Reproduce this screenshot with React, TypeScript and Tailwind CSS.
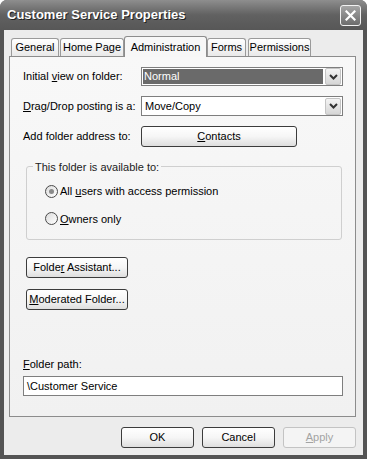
import React from "react";

const font = { fontFamily: '"Liberation Sans", Arial, sans-serif' };

const Tab = ({ label, width, active }: { label: string; width: string; active?: boolean }) => (
  <div
    className={
      active
        ? `${width} h-[21px] -mb-px relative z-10 border border-b-0 border-[#8c8c8c] rounded-t-[3px] bg-[#f7f7f7] flex items-center justify-center text-[11px] text-black`
        : `${width} h-[18px] border border-b-0 border-[#9a9a9a] rounded-t-[3px] bg-gradient-to-b from-white to-[#e9e9e9] flex items-center justify-center text-[11px] text-black`
    }
  >
    {label}
  </div>
);

const Chevron = () => (
  <div className="w-[16px] h-[17px] rounded-[2px] border border-[#c4c4c4] bg-gradient-to-b from-[#f4f4f4] to-[#d6d6d6] flex items-center justify-center">
    <svg width="9" height="6" viewBox="0 0 9 6">
      <path d="M1 1 L4.5 4.5 L8 1" fill="none" stroke="#333" strokeWidth="2" />
    </svg>
  </div>
);

const XpButton = ({
  children,
  width,
  disabled,
}: {
  children: React.ReactNode;
  width: string;
  disabled?: boolean;
}) => (
  <div
    className={
      disabled
        ? `${width} h-[21px] rounded-[3px] border border-[#c3c3c3] bg-[#f4f4f4] flex items-center justify-center text-[11px] text-[#a3a3a3]`
        : `${width} h-[21px] rounded-[3px] border border-[#3c3c3c] bg-gradient-to-b from-white via-[#f6f6f6] to-[#dedede] flex items-center justify-center text-[11px] text-black`
    }
  >
    {children}
  </div>
);

const Radio = ({ checked }: { checked?: boolean }) => (
  <div className="w-[13px] h-[13px] rounded-full border border-[#4a4a4a] bg-gradient-to-br from-[#dcdcdc] to-white flex items-center justify-center">
    {checked && <div className="w-[5px] h-[5px] rounded-full bg-[#8a8a8a]" />}
  </div>
);

export default function App() {
  return (
    <div className="w-[367px] h-[459px] bg-white" style={font}>
      <div className="w-[367px] h-[459px] rounded-t-[7px] bg-[#545454] flex flex-col">
        {/* title bar */}
        <div className="h-[30px] rounded-t-[7px] bg-gradient-to-b from-[#8e8e8e] via-[#616161] to-[#575757] flex items-center justify-between pl-[7px] pr-[6px]">
          <span className="text-[13px] font-bold text-white [text-shadow:1px_1px_0_#222]">
            Customer Service Properties
          </span>
          <div className="w-[21px] h-[21px] rounded-[3px] border border-[#f2f2f2] bg-gradient-to-b from-[#a5a5a5] to-[#6d6d6d] flex items-center justify-center">
            <svg width="11" height="11" viewBox="0 0 11 11">
              <path d="M1.5 1.5 L9.5 9.5 M9.5 1.5 L1.5 9.5" stroke="white" strokeWidth="2.2" strokeLinecap="square" />
            </svg>
          </div>
        </div>

        {/* body */}
        <div className="flex-1 mx-[4px] mb-[4px] bg-[#ececec] flex flex-col pl-[5px] pr-[7px] pt-[6px]">
          <div className="flex items-end h-[20px] pl-[2px]">
            <Tab label="General" width="w-[48px]" />
            <div className="w-[1px]" />
            <Tab label="Home Page" width="w-[64px]" />
            <Tab label="Administration" width="w-[83px]" active />
            <Tab label="Forms" width="w-[39px]" />
            <div className="w-[2px]" />
            <Tab label="Permissions" width="w-[63px]" />
          </div>

          <div className="w-[347px] h-[361px] border border-[#8c8c8c] bg-gradient-to-b from-[#f8f8f8] to-[#f1f1f1] flex flex-col text-[11px] text-black">
            <div className="flex items-center mt-[10px] pl-[13px]">
              <span className="w-[118px]">
                Initial <span className="underline">v</span>iew on folder:
              </span>
              <div className="w-[202px] h-[19px] border border-[#7e7e7e] bg-white flex items-center p-[1px]">
                <div className="flex-1 h-full bg-[#6a6a6a] text-white flex items-center pl-[1px] mr-[2px]">Normal</div>
                <Chevron />
              </div>
            </div>
            <div className="flex items-center mt-[10px] pl-[13px]">
              <span className="w-[118px]">
                <span className="underline">D</span>rag/Drop posting is a:
              </span>
              <div className="w-[202px] h-[20px] border border-[#7e7e7e] bg-white flex items-center p-[1px]">
                <div className="flex-1 pl-[2px]">Move/Copy</div>
                <Chevron />
              </div>
            </div>
            <div className="flex items-center mt-[10px] pl-[13px]">
              <span className="w-[118px]">Add folder address to:</span>
              <XpButton width="w-[156px]">
                <span>
                  <span className="underline">C</span>ontacts
                </span>
              </XpButton>
            </div>

            <div className="relative ml-[16px] mt-[19px] w-[316px] h-[74px] border border-[#cfcfcf] rounded-[3px] flex flex-col pl-[18px] pt-[16px] gap-[11px]">
              <span className="absolute -top-[8px] left-[6px] px-[2px] bg-[#f6f6f6] text-[#222]">
                This folder is available to:
              </span>
              <div className="flex items-center gap-[2px]">
                <Radio checked />
                <span>
                  All <span className="underline">u</span>sers with access permission
                </span>
              </div>
              <div className="flex items-center gap-[2px]">
                <Radio />
                <span>
                  <span className="underline">O</span>wners only
                </span>
              </div>
            </div>

            <div className="ml-[16px] mt-[17px]">
              <XpButton width="w-[102px]">
                <span>
                  Folde<span className="underline">r</span> Assistant...
                </span>
              </XpButton>
            </div>
            <div className="ml-[16px] mt-[11px]">
              <XpButton width="w-[102px]">
                <span>
                  <span className="underline">M</span>oderated Folder...
                </span>
              </XpButton>
            </div>

            <div className="mt-auto pl-[13px] pb-[20px] flex flex-col gap-[4px]">
              <span>
                <span className="underline">F</span>older path:
              </span>
              <div className="w-[320px] h-[20px] border border-[#7e7e7e] bg-white flex items-center pl-[3px]">
                \Customer Service
              </div>
            </div>
          </div>

          <div className="flex justify-end gap-[8px] mt-[10px]">
            <XpButton width="w-[73px]">OK</XpButton>
            <XpButton width="w-[73px]">Cancel</XpButton>
            <XpButton width="w-[73px]" disabled>
              <span>
                <span className="underline">A</span>pply
              </span>
            </XpButton>
          </div>
        </div>
      </div>
    </div>
  );
}
